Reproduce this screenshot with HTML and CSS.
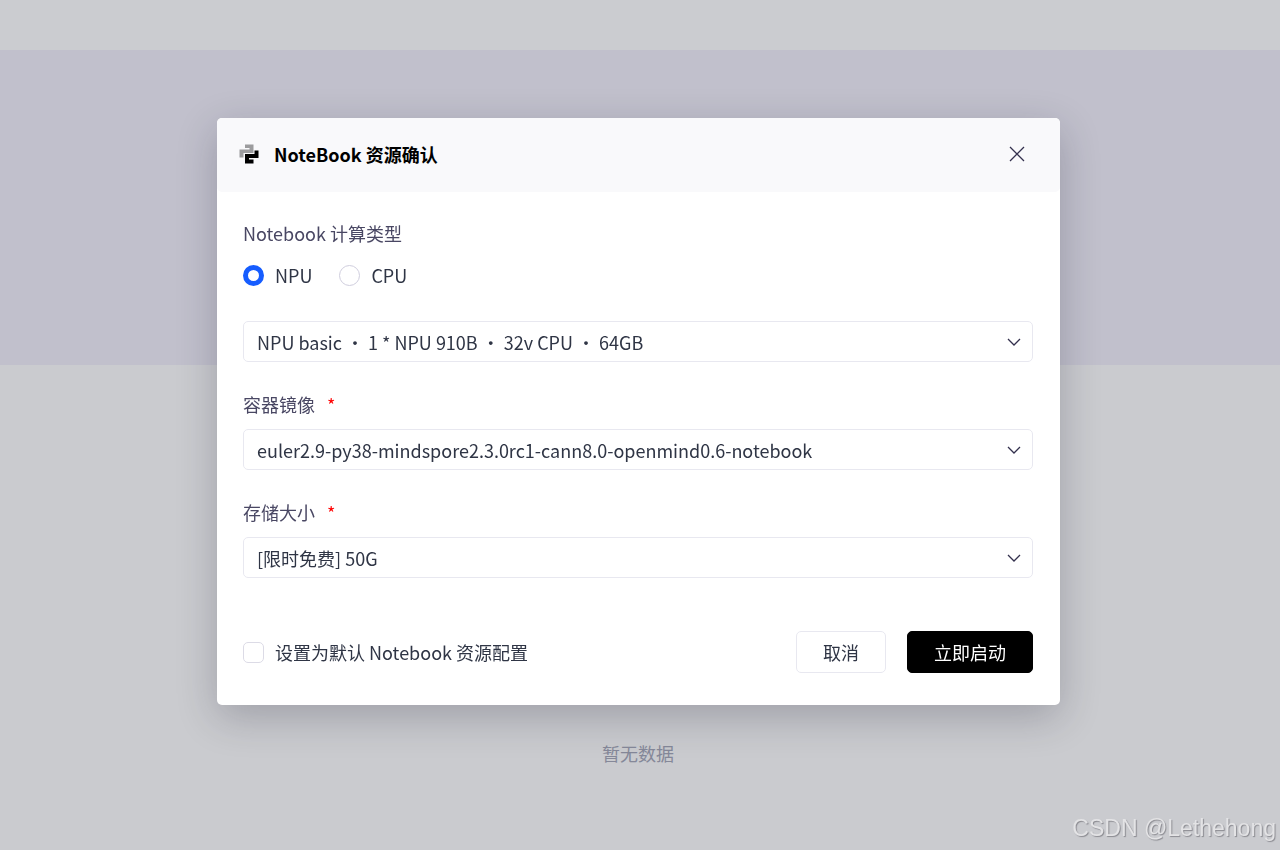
FILE: index.html
```html
<!DOCTYPE html>
<html lang="zh-CN">
<head>
  <meta charset="UTF-8" />
  <meta name="viewport" content="width=device-width, initial-scale=1.0"/>
  <title>NoteBook 资源确认</title>
  <link rel="stylesheet" href="styles.css">
</head>
<body>
  <header class="topbar"></header>
  <div class="banner"></div>
  <main class="content">
    <p class="empty">暂无数据</p>
  </main>

  <div class="overlay">
    <form class="modal" role="dialog" aria-labelledby="modal-title">
      <div class="modal-header">
        <svg class="logo" viewBox="0 0 20 20" aria-hidden="true">
          <path fill="#9c9c9e" d="M6 .5h8.500v8.500H4.500v4.500H.5V5.500h10V4H6z"/>
          <path fill="#000" d="M15.500 6.500h4v7.500h-9.500v1.500h4.500v4H6V10h9.500z"/>
        </svg>
        <h1 id="modal-title">NoteBook 资源确认</h1>
        <button type="button" class="close" aria-label="关闭">
          <svg viewBox="0 0 16 16"><path d="M1 1l14 14M15 1L1 15"/></svg>
        </button>
      </div>

      <div class="modal-body">
        <fieldset class="types">
          <legend>Notebook 计算类型</legend>
          <div class="radios">
            <label><input type="radio" name="type" checked>NPU</label>
            <label><input type="radio" name="type">CPU</label>
          </div>
        </fieldset>

        <div class="field">
          <select aria-label="计算资源">
            <option>NPU basic ・ 1 * NPU 910B ・ 32v CPU ・ 64GB</option>
          </select>
          <svg class="arrow" viewBox="0 0 14 8"><path d="M1 1l6 6 6-6"/></svg>
        </div>

        <label class="name" for="image">容器镜像 <span class="required">*</span></label>
        <div class="field">
          <select id="image">
            <option>euler2.9-py38-mindspore2.3.0rc1-cann8.0-openmind0.6-notebook</option>
          </select>
          <svg class="arrow" viewBox="0 0 14 8"><path d="M1 1l6 6 6-6"/></svg>
        </div>

        <label class="name" for="storage">存储大小 <span class="required">*</span></label>
        <div class="field">
          <select id="storage">
            <option>[限时免费] 50G</option>
          </select>
          <svg class="arrow" viewBox="0 0 14 8"><path d="M1 1l6 6 6-6"/></svg>
        </div>
      </div>

      <div class="modal-footer">
        <label class="default"><input type="checkbox">设置为默认 Notebook 资源配置</label>
        <button type="button" class="btn">取消</button>
        <button type="submit" class="btn btn-primary">立即启动</button>
      </div>
    </form>
  </div>

  <div class="watermark">CSDN @Lethehong</div>
</body>
</html>
```
FILE: styles.css
```css
* {
  box-sizing: border-box;
}
body {
  margin: 0;
  min-height: 100vh;
  display: flex;
  flex-direction: column;
  font-family: "Noto Sans CJK SC", sans-serif;
  font-size: 18px;
  line-height: 26px;
  background: #cacbcf;
  color: #2f3545;
}
button,
select {
  font: inherit;
  color: inherit;
}

.topbar {
  height: 50px;
  background: #cbccd0;
}
.banner {
  height: 315px;
  background: #c1c0cc;
}
.content {
  flex: 1;
  padding: 375px 4px 0 0;
}
.empty {
  margin: 0;
  text-align: center;
  color: #858899;
}

.overlay {
  position: fixed;
  inset: 0;
  padding: 118px 20px 20px 17px;
  overflow: auto;
}
.modal {
  max-width: 843px;
  margin: 0 auto;
  background: #fff;
  border-radius: 5px;
  box-shadow: 0 12px 40px rgba(20, 20, 40, 0.24);
}

.modal-header {
  display: flex;
  align-items: center;
  height: 74px;
  padding: 0 35px 2px 22px;
  background: #f9f9fb;
  border-radius: 5px;
}
.logo {
  width: 20px;
  height: 20px;
}
.modal-header h1 {
  flex: 1;
  margin: 0 0 0 15px;
  font-size: 18px;
  font-weight: 700;
  color: #000;
}
.close {
  display: flex;
  padding: 0;
  border: 0;
  background: none;
}
.close svg {
  width: 16px;
  height: 16px;
}
.close path,
.arrow path {
  fill: none;
  stroke: #33304d;
  stroke-width: 1.3;
}

.modal-body {
  padding: 28px 27px 0 26px;
}
.types {
  margin: 0 0 33px;
  padding: 0;
  border: 0;
}
.types legend {
  padding: 0;
  color: #494763;
}
.radios {
  display: flex;
  gap: 27px;
  margin-top: 16px;
}
.radios label,
.default {
  display: flex;
  align-items: center;
  gap: 11px;
}
input {
  appearance: none;
  width: 21px;
  height: 21px;
  margin: 0;
  background: #fff;
  border: 1px solid #cfcddd;
}
input[type="radio"] {
  border-radius: 50%;
}
input[type="radio"]:checked {
  border: 5px solid #165dff;
}
input[type="checkbox"] {
  border-color: #dcdbe6;
  border-radius: 5px;
}

.field {
  position: relative;
  margin-bottom: 29px;
}
.field select {
  appearance: none;
  display: block;
  width: 100%;
  height: 41px;
  padding: 0 40px 0 13px;
  background: #fff;
  border: 1px solid #e8e8f0;
  border-radius: 5px;
}
.arrow {
  position: absolute;
  top: 17px;
  right: 12px;
  width: 14px;
  height: 8px;
  pointer-events: none;
}
.name {
  display: block;
  margin-bottom: 12px;
  color: #494763;
}
.required {
  margin-left: 8px;
  color: #ff0000;
}

.modal-footer {
  display: flex;
  align-items: center;
  gap: 21px;
  padding: 24px 27px 32px 26px;
}
.default {
  flex: 1;
}
.btn {
  height: 42px;
  padding: 0 26px;
  background: #fff;
  border: 1px solid #e8e8f0;
  border-radius: 5px;
}
.btn-primary {
  background: #000;
  border-color: #000;
  color: #fff;
}

.watermark {
  position: fixed;
  right: 4px;
  bottom: 8px;
  font-family: "Liberation Sans", Arial, sans-serif;
  font-size: 23px;
  line-height: 28px;
  color: #e3e3e5;
  text-shadow: 1px 1px 1px #8a8a90;
}
```
